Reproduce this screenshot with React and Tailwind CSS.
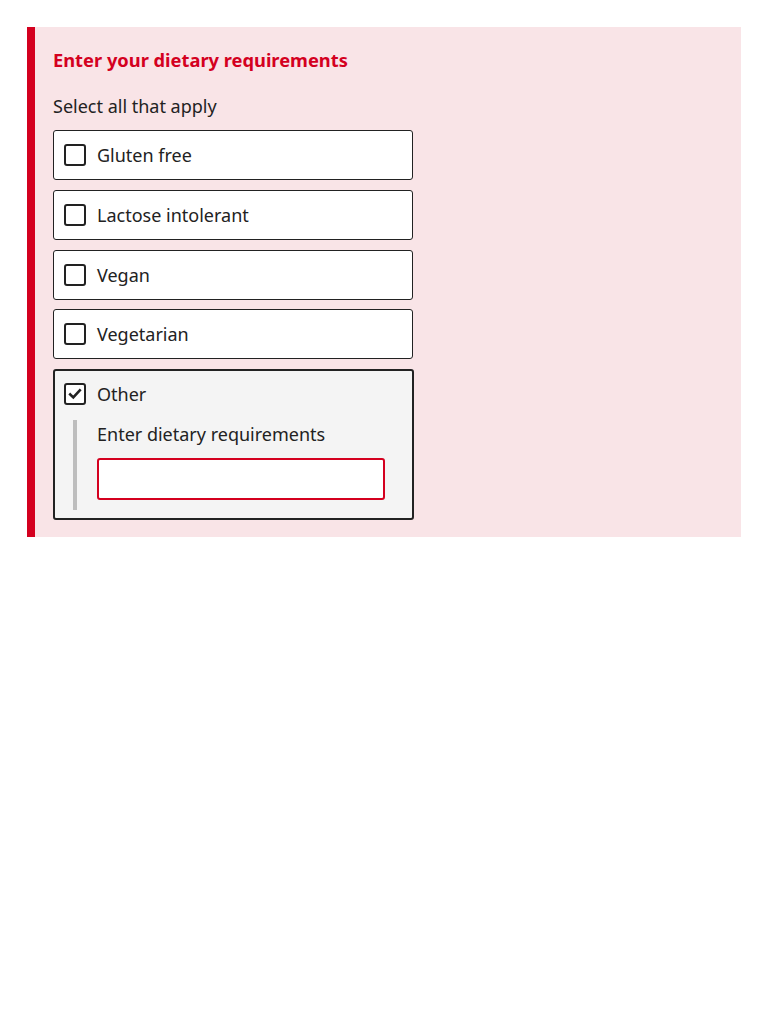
import React from "react";

function Box({ checked }) {
  return (
    <span className="flex h-[22px] w-[22px] shrink-0 items-center justify-center rounded-[3px] border-2 border-[#222222] bg-white">
      {checked && (
        <svg width="14" height="14" viewBox="0 0 14 14" fill="none">
          <path d="M2.2 7.4 L5.3 10.4 L11.8 3.4" stroke="#222222" strokeWidth="2.6" strokeLinecap="square" strokeLinejoin="miter" />
        </svg>
      )}
    </span>
  );
}

function Option({ label }) {
  return (
    <div className="flex h-[50px] w-[360px] items-center gap-[11px] rounded-[3px] border border-[#222222] bg-white px-[10px]">
      <Box />
      <span className="text-[18px] leading-[26px] text-[#222222]">{label}</span>
    </div>
  );
}

export default function App() {
  return (
    <div className="bg-white p-[27px]" style={{ fontFamily: '"Noto Sans", sans-serif' }}>
      <div className="border-l-8 border-[#d4001f] bg-[#f9e4e7] pb-[17px] pl-[18px] pt-[20px]">
        <h2 className="text-[18.3px] font-bold leading-[26px] text-[#d4001f]">Enter your dietary requirements</h2>
        <p className="mt-[20px] mb-[11px] text-[18px] leading-[26px] text-[#222222]">Select all that apply</p>
        <div className="flex flex-col gap-[9.75px]">
          <Option label="Gluten free" />
          <Option label="Lactose intolerant" />
          <Option label="Vegan" />
          <Option label="Vegetarian" />
          <div className="w-[361px] rounded-[3px] border-2 border-[#222222] bg-[#f4f4f4]">
            <div className="flex items-center gap-[11px] px-[9px] py-[12px]">
              <Box checked />
              <span className="text-[18px] leading-[22px] text-[#222222]">Other</span>
            </div>
            <div className="mb-[8px] ml-[18px] mt-[3px] border-l-4 border-[#bdbdbd] pl-[20px] pt-[1px] pb-[10px]">
              <label className="block text-[18px] leading-[26px] text-[#222222]">Enter dietary requirements</label>
              <input type="text" className="mt-[11px] block h-[42px] w-[288px] rounded-[3px] border-2 border-[#d4001f] bg-white px-2 outline-none" />
            </div>
          </div>
        </div>
      </div>
    </div>
  );
}
